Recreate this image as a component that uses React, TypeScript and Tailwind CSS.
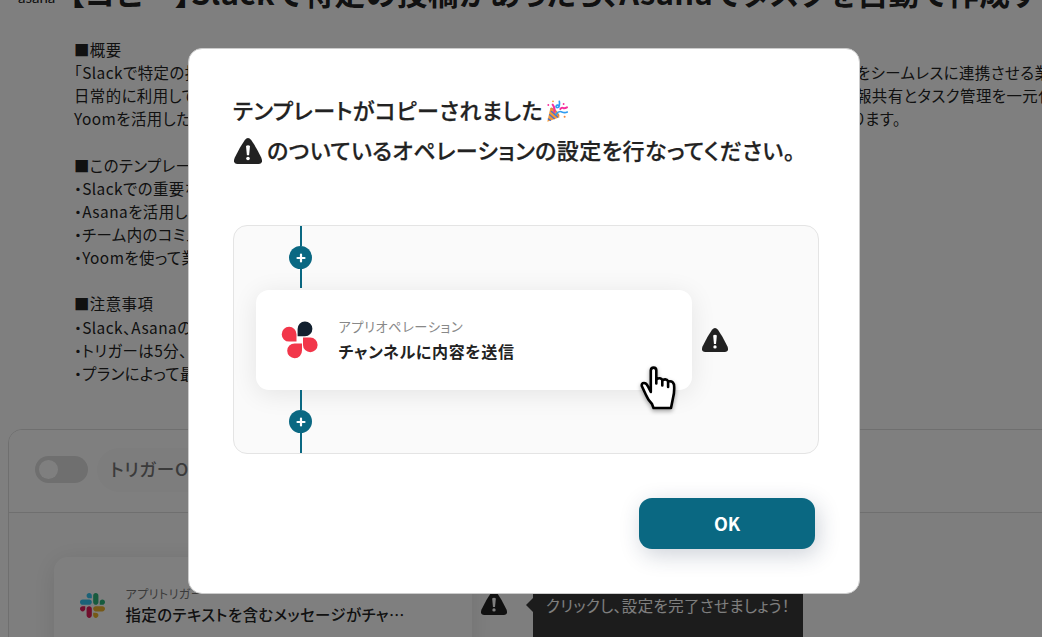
const summary = [
  '■概要',
  '「Slackで特定の投稿',
  '日常的に利用して',
  'Yoomを活用した',
  '',
  '■このテンプレート',
  '・Slackでの重要な',
  '・Asanaを活用し',
  '・チーム内のコミュ',
  '・Yoomを使って業',
  '',
  '■注意事項',
  '・Slack、Asanaの',
  '・トリガーは5分、',
  '・プランによって最',
];

const summaryEnd = ['をシームレスに連携させる業務', '報共有とタスク管理を一元化'];

function WarningIcon({ className }: { className: string }) {
  return (
    <svg viewBox="0 0 28 26" className={className} preserveAspectRatio="none">
      <path d="M10.8 1.9Q14-1.8 17.2 1.9Q22.6 9.6 27.3 19.8Q29.6 25.6 24.5 26H3.5Q-1.6 25.6.7 19.8Q5.4 9.6 10.8 1.9Z" fill="#222" />
      <path d="M12 8Q14 6.6 16 8L15.1 17.2H12.9Z" fill="#fff" />
      <circle cx="14" cy="20.5" r="1.8" fill="#fff" />
    </svg>
  );
}

function SlackLogo() {
  return (
    <svg viewBox="0 0 122.8 122.8" className="size-[25px] shrink-0">
      <path fill="#E01E5A" d="M25.8 77.6c0 7.1-5.8 12.9-12.9 12.9S0 84.7 0 77.6s5.8-12.9 12.9-12.9h12.9v12.9zm6.5 0c0-7.1 5.8-12.9 12.9-12.9s12.9 5.8 12.9 12.9v32.3c0 7.1-5.8 12.9-12.9 12.9s-12.9-5.8-12.9-12.9V77.6z" />
      <path fill="#36C5F0" d="M45.2 25.8c-7.1 0-12.9-5.8-12.9-12.9S38.1 0 45.2 0s12.9 5.8 12.9 12.9v12.9H45.2zm0 6.5c7.1 0 12.9 5.8 12.9 12.9s-5.8 12.9-12.9 12.9H12.9C5.8 58.1 0 52.3 0 45.2s5.8-12.9 12.9-12.9h32.3z" />
      <path fill="#2EB67D" d="M97 45.2c0-7.1 5.8-12.9 12.9-12.9s12.9 5.8 12.9 12.9-5.8 12.9-12.9 12.9H97V45.2zm-6.5 0c0 7.1-5.8 12.9-12.9 12.9s-12.9-5.8-12.9-12.9V12.9C64.7 5.8 70.5 0 77.6 0s12.9 5.8 12.9 12.9v32.3z" />
      <path fill="#ECB22E" d="M77.6 97c7.1 0 12.9 5.8 12.9 12.9s-5.8 12.9-12.9 12.9-12.9-5.8-12.9-12.9V97h12.9zm0-6.5c-7.1 0-12.9-5.8-12.9-12.9s5.8-12.9 12.9-12.9h32.3c7.1 0 12.9 5.8 12.9 12.9s-5.8 12.9-12.9 12.9H77.6z" />
    </svg>
  );
}

function YoomLogo() {
  return (
    <svg viewBox="0 0 38 38" className="size-[38px] shrink-0">
      <path fill="#12202f" d="M16.6 15.2V8a7.4 7.4 0 1 1 7.4 7.2Z" />
      <path fill="#f2364a" d="M15.2 20.6H8.1a7.4 7.4 0 1 1 7.4-7.4V20.6Z" />
      <path fill="#f2364a" d="M21 22.4V29.6a7.4 7.4 0 1 1-7.4-7.2Z" />
      <path fill="#f2364a" d="M22 16.6H29.3a7.3 7.3 0 1 1-7.3 7.3Z" />
    </svg>
  );
}

function PartyPopper() {
  return (
    <svg viewBox="0 0 64 66" className="h-[22px] w-[21.3px]" fill="none" strokeLinecap="round">
      <path d="M1 65L10 24Q28 28 38 52Z" fill="#f59a36" />
      <path d="M8 44L22 56M4 57L10 61M13 34L32 51" stroke="#4a6fd0" strokeWidth="4" />
      <path d="M13 25Q25 27 35 46" stroke="#d98a45" strokeWidth="5" />
      <path d="M22 35Q25 24 17 14M40 27Q44 21 49 24Q53 26 60 22" stroke="#f52f9d" strokeWidth="6" />
      <path d="M37 4Q39 14 35 22Q27 25 27 19Q30 13 36 17M27 43Q36 31 45 36Q53 40 61 36" stroke="#309cf0" strokeWidth="5" />
      <circle cx="4" cy="15" r="2.8" fill="#f52f9d" />
      <circle cx="18" cy="4" r="2.8" fill="#f5a03a" />
      <circle cx="50" cy="12" r="2.8" fill="#f52f9d" />
      <circle cx="53" cy="50" r="3" fill="#f5853a" />
    </svg>
  );
}

function HandCursor() {
  return (
    <svg viewBox="0 0 36 44" className="absolute left-[406px] top-[140px] h-[44px] w-[36px] overflow-visible drop-shadow-[0_2px_2px_rgba(0,0,0,0.35)]">
      <path
        d="M10.8 26V4.4Q11 1.6 13.6 1.6T16.3 4.4V13.4Q20.5 10.8 22.5 14.2Q26.3 12 28.3 15.4Q32.7 14.4 34 18.5Q34.7 26 33 32L31 42H13.5L12 38Q8 34 6 29L1.8 20Q1.4 17 4 17Q6.5 17 8 20.5Z"
        fill="#fff"
        stroke="#000"
        strokeWidth="2.6"
        strokeLinejoin="round"
      />
      <path d="M16.3 12V17.5M22.3 14V19.5M28.1 15.5V21" stroke="#000" strokeWidth="2.6" strokeLinecap="round" />
    </svg>
  );
}

function PlusNode() {
  return (
    <div className="flex size-[23px] shrink-0 items-center justify-center rounded-full bg-[#0a6882]">
      <svg viewBox="0 0 10 10" className="size-[10px]">
        <path d="M5 1.5V8.5M1.5 5H8.5" stroke="#fff" strokeWidth="2.2" strokeLinecap="round" />
      </svg>
    </div>
  );
}

function Line({ className }: { className: string }) {
  return <div className={`w-[2.4px] shrink-0 bg-[#0a6882] ${className}`} />;
}

function Workspace() {
  return (
    <div className="flex h-full flex-col overflow-hidden whitespace-nowrap text-[#222]">
      <header className="flex h-[38px] shrink-0 pl-[18px]">
        <span className="-mt-[15px] w-[51px] shrink-0 font-['Lato'] text-[15px] leading-[24px]">asana</span>
        <h1 className="-mt-[31px] text-[30.8px] font-bold leading-[46px] tracking-[0.013em]">
          【コピー】Slackで特定の投稿があったら、Asanaでタスクを自動で作成する
        </h1>
      </header>

      <section className="flex h-[391px] shrink-0 pl-[74px] text-[15.4px] leading-[23.14px] tracking-[0.03em]">
        <div className="w-[783px] shrink-0">
          {summary.map((line, i) => (
            <p key={i} className="h-[23.14px]">{line}</p>
          ))}
        </div>
        <div className="shrink-0 pt-[23.14px]">
          {summaryEnd.map((line) => (
            <p key={line} className="-ml-px">{line}</p>
          ))}
          <p className="-ml-[5px]">ります。</p>
        </div>
      </section>

      <section className="ml-2 h-[300px] w-[1100px] shrink-0 overflow-hidden rounded-tl-[14px] border border-[#dedede] bg-[#fdfdfd]">
        <div className="flex h-[83px] items-center border-b border-[#dedede] bg-white pb-[3px] pl-[26px]">
          <div className="flex h-[27px] w-[53px] items-center rounded-full bg-[#dedede] pl-1">
            <div className="size-[19px] rounded-full bg-white" />
          </div>
          <div className="ml-[9px] flex h-[44px] w-[160px] items-center rounded-full bg-[#fafafa] pl-[13px] text-[17.6px] font-medium tracking-[0.04em] text-[#777]">
            トリガーON
          </div>
        </div>
        <div className="flex pl-[45px] pt-[44px]">
          <div className="flex h-[100px] w-[418px] gap-[21px] rounded-[14px] bg-white pl-[26px] pt-[35.5px] shadow-[0_4px_26px_rgba(0,0,0,0.11)]">
            <SlackLogo />
            <div className="-mt-[7.5px] ml-[-0.5px]">
              <p className="text-[12.1px] leading-[18px] tracking-[0.03em] text-[#777]">アプリトリガー</p>
              <p className="text-[15.4px] font-medium leading-[22px] tracking-[0.03em]">指定のテキストを含むメッセージがチャ…</p>
            </div>
          </div>
          <WarningIcon className="ml-[9px] mt-[34px] h-[24px] w-[26px]" />
          <div className="ml-[19px] mt-[41px] h-[14px] w-[7px] bg-[#383838] [clip-path:polygon(100%_0,100%_100%,0_50%)]" />
          <div className="h-[110px] w-[270px] bg-[#383838] pl-[13px] pt-[35px] text-[15.4px] leading-[26px] tracking-[0.03em] text-white">
            クリックし、設定を完了させましょう！
          </div>
        </div>
      </section>
    </div>
  );
}

function OperationPreview() {
  return (
    <div className="relative flex h-[229px] flex-col overflow-hidden rounded-[14px] border border-[#e4e4e4] bg-[#fafafa] pl-[22px]">
      <div className="flex h-[64px] w-[89.4px] shrink-0 flex-col items-center">
        <Line className="h-[20px]" />
        <PlusNode />
        <Line className="h-[19px]" />
      </div>
      <div className="flex items-center">
        <div className="flex h-[100px] w-[436px] shrink-0 items-center rounded-[13px] bg-white pl-[25px] shadow-[0_4px_26px_rgba(0,0,0,0.09)]">
          <YoomLogo />
          <div className="mb-[2px] ml-[19.5px]">
            <p className="text-[13.2px] leading-[20px] tracking-[0.045em] text-[#888]">アプリオペレーション</p>
            <p className="mt-[3px] text-[16px] font-bold leading-[22px] tracking-[0.04em] text-[#222]">チャンネルに内容を送信</p>
          </div>
        </div>
        <WarningIcon className="ml-[10.4px] h-[24px] w-[26px]" />
      </div>
      <div className="relative flex h-[63px] w-[89.4px] shrink-0 flex-col items-center">
        <Line className="h-[20px]" />
        <PlusNode />
        <Line className="h-[20px]" />
      </div>
      <HandCursor />
    </div>
  );
}

export default function App() {
  return (
    <div className="relative h-[637px] w-[1042px] overflow-hidden bg-white font-['Noto_Sans_CJK_JP',sans-serif] [font-feature-settings:'palt']">
      <Workspace />
      <div className="absolute inset-0 flex bg-black/50">
        <div role="dialog" className="ml-[188px] mt-[48px] flex h-[546px] w-[672px] flex-col rounded-[14px] border border-[#ccc] bg-white pl-11 pr-10 pt-[40px] text-[#222]">
          <div className="h-[82px] whitespace-nowrap text-[22px] font-medium leading-[41px] tracking-[0.021em] [-webkit-text-stroke:0.25px_#222]">
            <p className="flex h-[41px] items-center">
              テンプレートがコピーされました
              <span className="ml-[4px] mt-[2px]"><PartyPopper /></span>
            </p>
            <p className="flex h-[39px] items-center">
              <WarningIcon className="ml-[1px] mr-[5px] mt-[2px] h-[26px] w-[28px]" />
              のついているオペレーションの設定を行なってください。
            </p>
          </div>
          <div className="mt-[54px]">
            <OperationPreview />
          </div>
          <button className="ml-auto mr-[4px] mt-[44px] h-[51px] w-[176px] rounded-[13px] bg-[#0a6882] text-[18px] font-bold text-white shadow-[3px_6px_22px_rgba(30,50,80,0.22)]">
            OK
          </button>
        </div>
      </div>
    </div>
  );
}
